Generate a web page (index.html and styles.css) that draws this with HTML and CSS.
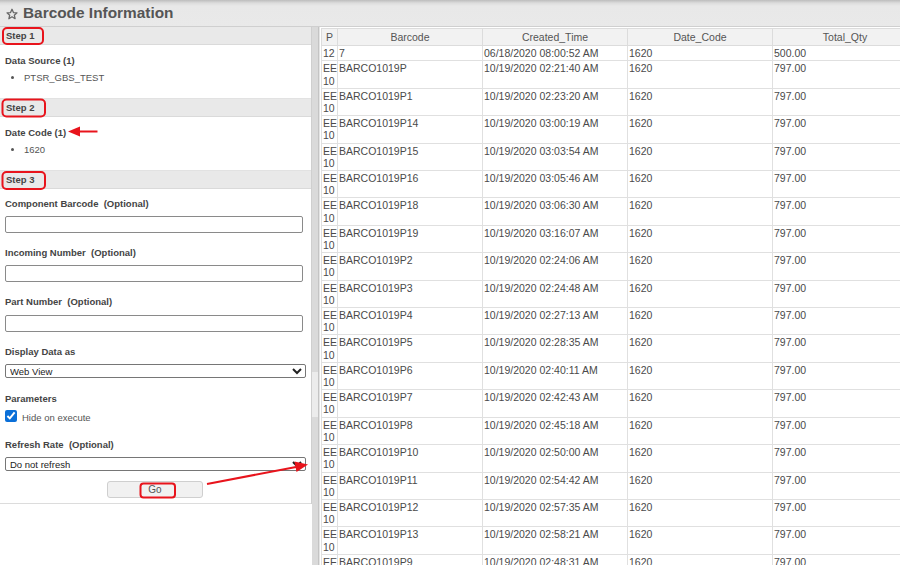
FILE: index.html
```html
<!DOCTYPE html>
<html>
<head>
<meta charset="utf-8">
<link rel="stylesheet" href="styles.css">
</head>
<body>
<div class="app">
  <header class="titlebar">
    <svg class="star" width="12" height="12" viewBox="0 0 24 24"><path d="M12 2.5l2.9 6.6 7.1.6-5.4 4.7 1.6 7-6.2-3.8-6.2 3.8 1.6-7L2 9.7l7.1-.6z" fill="none" stroke="#666" stroke-width="2.6" stroke-linejoin="round"/></svg>
    <h1 class="title">Barcode Information</h1>
  </header>
  <div class="main">
    <aside class="left">
      <div class="band">Step 1</div>
      <div class="sect sect-a">
        <div class="lbl">Data Source (1)</div>
        <ul class="items"><li>PTSR_GBS_TEST</li></ul>
      </div>
      <div class="band">Step 2</div>
      <div class="sect sect-a">
        <div class="lbl">Date Code (1)</div>
        <ul class="items"><li>1620</li></ul>
      </div>
      <div class="band">Step 3</div>
      <div class="sect sect-b">
        <div class="field">
          <div class="lbl">Component Barcode&nbsp; (Optional)</div>
          <input class="txt" type="text">
        </div>
        <div class="field">
          <div class="lbl">Incoming Number&nbsp; (Optional)</div>
          <input class="txt" type="text">
        </div>
        <div class="field field-pn">
          <div class="lbl">Part Number&nbsp; (Optional)</div>
          <input class="txt" type="text">
        </div>
        <div class="field">
          <div class="lbl">Display Data as</div>
          <select class="sel sel-big"><option>Web View</option></select>
        </div>
        <div class="field field-params">
          <div class="lbl">Parameters</div>
          <label class="chk"><input type="checkbox" checked><span>Hide on execute</span></label>
        </div>
        <div class="field">
          <div class="lbl">Refresh Rate&nbsp; (Optional)</div>
          <select class="sel"><option>Do not refresh</option></select>
        </div>
        <div class="actions"><button class="go">Go</button></div>
      </div>
    </aside>
    <div class="splitter"><div class="grip"></div></div>
    <section class="right">
      <table class="grid">
        <colgroup><col class="c-p"><col class="c-w"><col class="c-w"><col class="c-w"><col class="c-w"></colgroup>
        <thead>
          <tr><th>P</th><th>Barcode</th><th>Created_Time</th><th>Date_Code</th><th>Total_Qty</th></tr>
        </thead>
        <tbody>
          <tr><td class="p">12</td><td>7</td><td>06/18/2020 08:00:52 AM</td><td>1620</td><td>500.00</td></tr>
          <tr><td class="p">EE 10</td><td>BARCO1019P</td><td>10/19/2020 02:21:40 AM</td><td>1620</td><td>797.00</td></tr>
          <tr><td class="p">EE 10</td><td>BARCO1019P1</td><td>10/19/2020 02:23:20 AM</td><td>1620</td><td>797.00</td></tr>
          <tr><td class="p">EE 10</td><td>BARCO1019P14</td><td>10/19/2020 03:00:19 AM</td><td>1620</td><td>797.00</td></tr>
          <tr><td class="p">EE 10</td><td>BARCO1019P15</td><td>10/19/2020 03:03:54 AM</td><td>1620</td><td>797.00</td></tr>
          <tr><td class="p">EE 10</td><td>BARCO1019P16</td><td>10/19/2020 03:05:46 AM</td><td>1620</td><td>797.00</td></tr>
          <tr><td class="p">EE 10</td><td>BARCO1019P18</td><td>10/19/2020 03:06:30 AM</td><td>1620</td><td>797.00</td></tr>
          <tr><td class="p">EE 10</td><td>BARCO1019P19</td><td>10/19/2020 03:16:07 AM</td><td>1620</td><td>797.00</td></tr>
          <tr><td class="p">EE 10</td><td>BARCO1019P2</td><td>10/19/2020 02:24:06 AM</td><td>1620</td><td>797.00</td></tr>
          <tr><td class="p">EE 10</td><td>BARCO1019P3</td><td>10/19/2020 02:24:48 AM</td><td>1620</td><td>797.00</td></tr>
          <tr><td class="p">EE 10</td><td>BARCO1019P4</td><td>10/19/2020 02:27:13 AM</td><td>1620</td><td>797.00</td></tr>
          <tr><td class="p">EE 10</td><td>BARCO1019P5</td><td>10/19/2020 02:28:35 AM</td><td>1620</td><td>797.00</td></tr>
          <tr><td class="p">EE 10</td><td>BARCO1019P6</td><td>10/19/2020 02:40:11 AM</td><td>1620</td><td>797.00</td></tr>
          <tr><td class="p">EE 10</td><td>BARCO1019P7</td><td>10/19/2020 02:42:43 AM</td><td>1620</td><td>797.00</td></tr>
          <tr><td class="p">EE 10</td><td>BARCO1019P8</td><td>10/19/2020 02:45:18 AM</td><td>1620</td><td>797.00</td></tr>
          <tr><td class="p">EE 10</td><td>BARCO1019P10</td><td>10/19/2020 02:50:00 AM</td><td>1620</td><td>797.00</td></tr>
          <tr><td class="p">EE 10</td><td>BARCO1019P11</td><td>10/19/2020 02:54:42 AM</td><td>1620</td><td>797.00</td></tr>
          <tr><td class="p">EE 10</td><td>BARCO1019P12</td><td>10/19/2020 02:57:35 AM</td><td>1620</td><td>797.00</td></tr>
          <tr><td class="p">EE 10</td><td>BARCO1019P13</td><td>10/19/2020 02:58:21 AM</td><td>1620</td><td>797.00</td></tr>
          <tr><td class="p">EE 10</td><td>BARCO1019P9</td><td>10/19/2020 02:48:31 AM</td><td>1620</td><td>797.00</td></tr>
        </tbody>
      </table>
    </section>
  </div>
  <svg class="annot" width="900" height="565" viewBox="0 0 900 565">
    <g fill="none" stroke="#e8141c" stroke-width="2">
      <rect x="3" y="28" width="40" height="16" rx="4"/>
      <rect x="2.5" y="99.5" width="42.5" height="17" rx="4"/>
      <rect x="2.5" y="172" width="42.5" height="17" rx="4"/>
      <rect x="140.5" y="483.5" width="34.5" height="14" rx="3"/>
      <line x1="97.5" y1="131.5" x2="76" y2="131.5"/>
      <line x1="207" y1="484" x2="296" y2="467"/>
    </g>
    <g fill="#e8141c">
      <polygon points="68,131.5 80,126.5 80,136.5"/>
      <polygon points="308,464.5 294.5,461.5 296.5,472"/>
    </g>
  </svg>
</div>
</body>
</html>
```

FILE: styles.css
```css
html, body {
  margin: 0;
  padding: 0;
}
body {
  width: 900px;
  height: 565px;
  overflow: hidden;
  background: #fff;
  font-family: "Liberation Sans", Arial, sans-serif;
  color: #444;
}
.app {
  position: relative;
  width: 900px;
  height: 565px;
  display: flex;
  flex-direction: column;
  overflow: hidden;
}
.titlebar {
  flex: 0 0 auto;
  height: 26px;
  border-bottom: 1px solid #cfcfcf;
  background: linear-gradient(#bcbcbc 0px, #dcdcdc 3px, #e8e8e8 6px, #e9e9e9 100%);
  display: flex;
  align-items: center;
  padding-left: 6px;
  gap: 5px;
}
.star {
  display: block;
  margin-top: 2px;
}
.title {
  margin: 0;
  font-size: 15.4px;
  font-weight: bold;
  color: #555;
  line-height: 18px;
}
.main {
  flex: 1 1 auto;
  display: flex;
  min-height: 0;
}
.left {
  flex: 0 0 311px;
  width: 311px;
  border-right: 1px solid #cfcfcf;
  font-size: 9.5px;
  line-height: 11px;
  align-self: flex-start;
}
.band {
  height: 17px;
  line-height: 17px;
  background: #e9e9e9;
  border-bottom: 1px solid #dadada;
  border-top: 1px solid #e2e2e2;
  margin-top: -1px;
  padding-left: 6px;
  font-weight: bold;
  color: #444;
}
.band:first-child {
  margin-top: 0;
  border-top: 0;
  height: 17px;
}
.sect {
  padding: 0 5px;
}
.sect-a {
  padding-top: 9.5px;
  padding-bottom: 16.5px;
}
.sect-b {
  padding-top: 9px;
  padding-bottom: 5px;
  border-bottom: 1px solid #dcdcdc;
  display: flex;
  flex-direction: column;
  gap: 14.5px;
}
.lbl {
  font-weight: bold;
  color: #444;
}
.items {
  margin: 6px 0 0 0;
  padding-left: 19px;
  color: #555;
}
.items li {
  line-height: 11px;
}
.field {
  display: flex;
  flex-direction: column;
  gap: 6.5px;
}
.field-pn {
  gap: 7.5px;
}
.field-params {
  gap: 6px;
  margin-bottom: 2px;
}
.txt {
  box-sizing: border-box;
  width: 298px;
  height: 17px;
  margin: 0;
  border: 1px solid #8a8a8a;
  border-radius: 2px;
  background: #fff;
  padding: 0 3px;
  font: inherit;
}
.sel {
  box-sizing: border-box;
  width: 301px;
  height: 14.5px;
  margin: 0;
  border: 1px solid #767676;
  border-radius: 2px;
  background: #fff;
  color: #222;
  font-family: "Liberation Sans", Arial, sans-serif;
  font-size: 9.5px;
  padding: 0;
}
.chk {
  display: flex;
  align-items: center;
  gap: 5px;
  height: 13px;
  color: #555;
}
.chk input {
  width: 12px;
  height: 12px;
  margin: 0;
  accent-color: #0a6fd8;
}
.chk span {
  margin-top: 3px;
}
.actions {
  display: flex;
  justify-content: center;
  margin-top: -4.5px;
}
.go {
  box-sizing: border-box;
  width: 96px;
  height: 17px;
  margin: 0 0 0 -1px;
  padding: 0;
  border: 1px solid #cfcfcf;
  border-radius: 3px;
  background: #f1f1f1;
  color: #555;
  font-family: "Liberation Sans", Arial, sans-serif;
  font-size: 10px;
}
.splitter {
  flex: 0 0 6px;
  background: #dadada;
  border-right: 1px solid #c4c4c4;
  display: flex;
  flex-direction: column;
}
.grip {
  margin-top: 345px;
  height: 45px;
  background: #ececec;
}
.right {
  flex: 1 1 auto;
  min-width: 0;
  overflow: hidden;
  padding: 1px 0 0 1px;
  border-left: 1px solid #e4e4e4;
}
.grid {
  border-collapse: collapse;
  table-layout: fixed;
  width: 596px;
  font-size: 10.5px;
  line-height: 12.2px;
  color: #4a4a4a;
}
.c-p { width: 16px; }
.c-w { width: 145px; }
.grid th {
  font-weight: normal;
  background: #f2f2f2;
  color: #555;
  border: 1px solid #dcdcdc;
  padding: 2px 2px 2px;
  text-align: center;
  white-space: nowrap;
  overflow: hidden;
}
.grid td {
  border: 1px solid #e0e0e0;
  padding: 1px 2px 1px 1px;
  vertical-align: top;
  text-align: left;
  overflow: hidden;
  white-space: nowrap;
}
.grid td.p {
  white-space: normal;
  padding: 1px 0 1px 1px;
  word-break: normal;
}
.annot {
  position: absolute;
  left: 0;
  top: 0;
  pointer-events: none;
}
```
